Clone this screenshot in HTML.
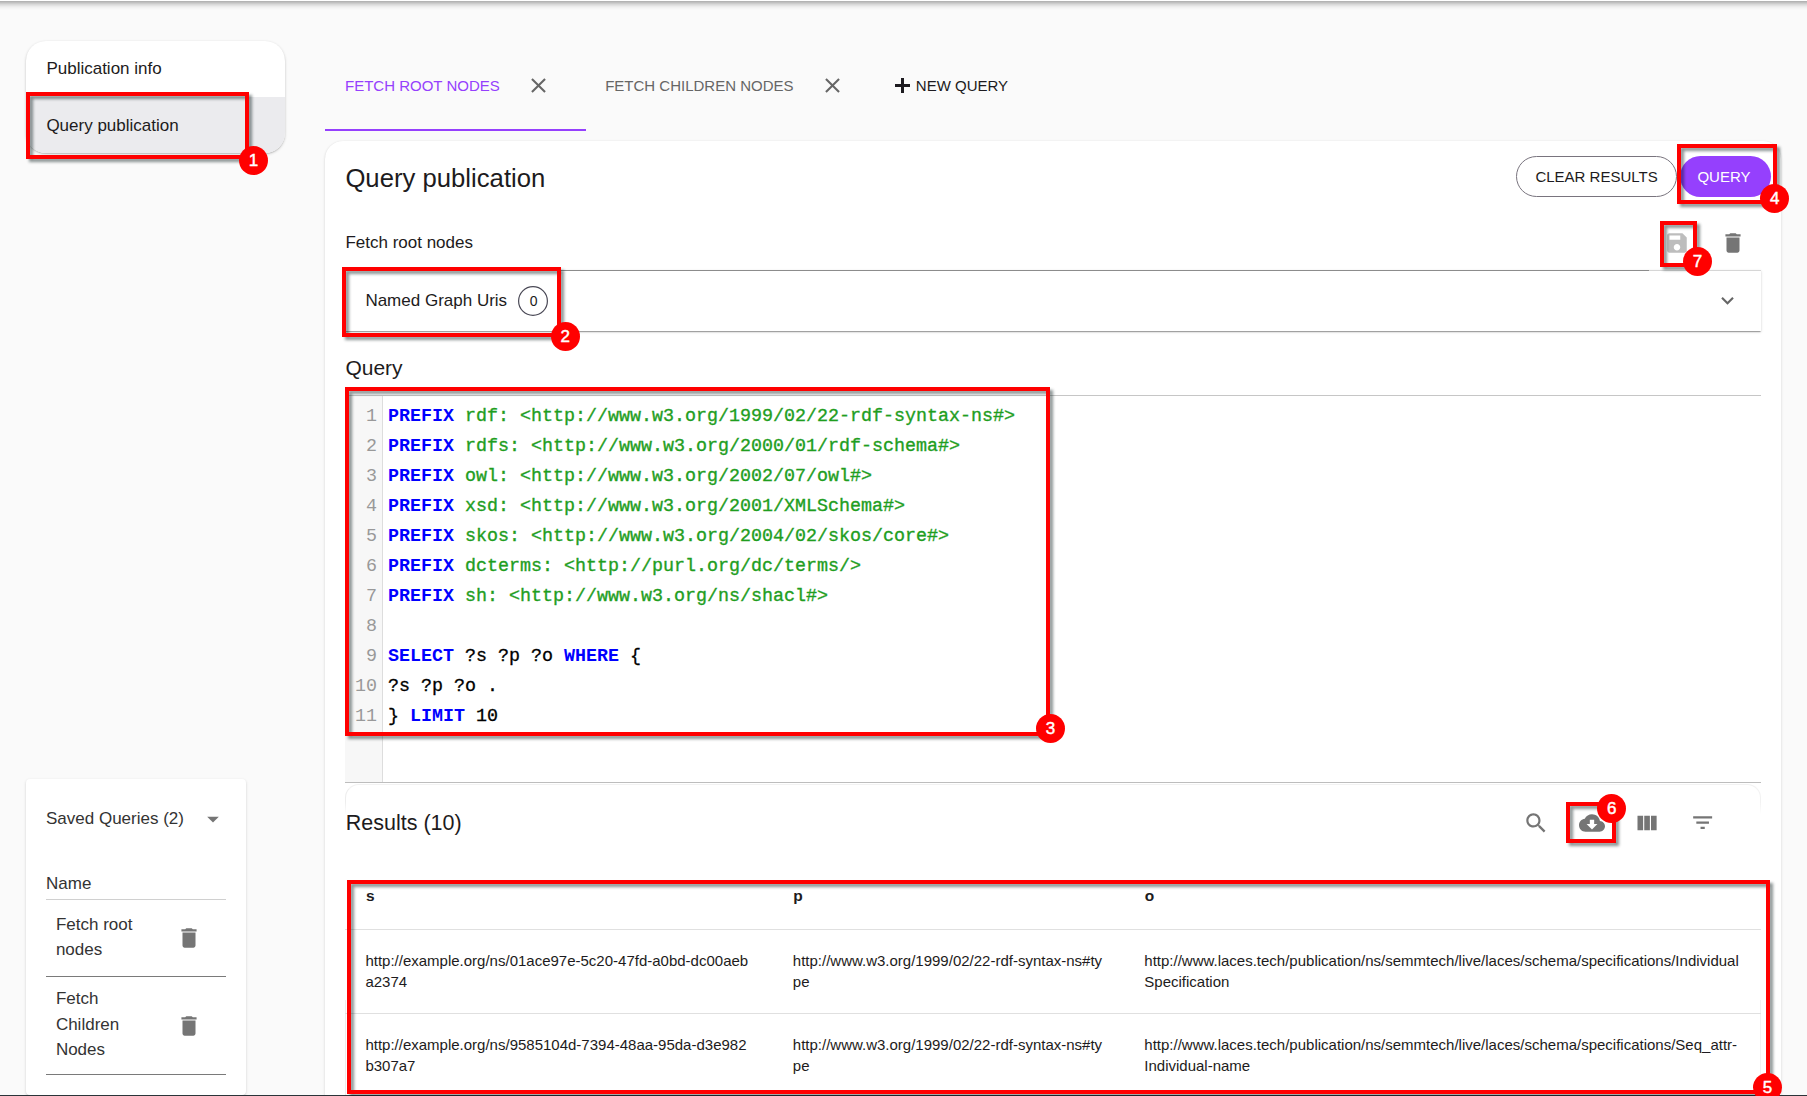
<!DOCTYPE html>
<html><head><meta charset="utf-8"><title>Query publication</title>
<style>
html,body{margin:0;padding:0}
body{width:1807px;height:1096px;overflow:hidden;background:#fafafa;position:relative;font-family:"Liberation Sans",sans-serif;-webkit-font-smoothing:antialiased}
.a{position:absolute}
.t{position:absolute;white-space:nowrap}
.rb{position:absolute;box-sizing:border-box;border:4px solid #f00;filter:drop-shadow(3px 3px 1.5px rgba(0,20,20,.45))}
.bd{position:absolute;border-radius:50%;background:#f00;color:#fff;text-align:center;font-size:17px;-webkit-text-stroke:0.45px #fff;font-family:"Liberation Sans",sans-serif}
</style></head><body>
<div class="a" style="left:-30px;top:-20px;width:1867px;height:21px;background:#fff;box-shadow:0 2px 4px -1px rgba(0,0,0,.2),0 4px 5px 0 rgba(0,0,0,.14),0 1px 10px 0 rgba(0,0,0,.12)"></div>
<div class="a" style="left:26px;top:41px;width:259px;height:112px;border-radius:20px;background:#fff;overflow:hidden;box-shadow:0 1px 3px rgba(0,0,0,.2),0 1px 1px rgba(0,0,0,.1)"><div class="a" style="left:0;top:56px;width:259px;height:56px;background:#ebebee"></div></div>
<div class="t" style="left:46.4px;top:59.61px;font-size:17px;line-height:17px;color:#1d1b20;font-weight:400;font-family:'Liberation Sans', sans-serif;">Publication info</div>
<div class="t" style="left:46.4px;top:116.61px;font-size:17px;line-height:17px;color:#1d1b20;font-weight:400;font-family:'Liberation Sans', sans-serif;">Query publication</div>
<div class="a" style="left:26px;top:779px;width:220px;height:316px;border-radius:4px;background:#fff;box-shadow:0 1px 3px rgba(0,0,0,.16),0 1px 1px rgba(0,0,0,.05)"></div>
<div class="t" style="left:46.0px;top:810.21px;font-size:17px;line-height:17px;color:#333;font-weight:400;font-family:'Liberation Sans', sans-serif;">Saved Queries (2)</div>
<svg class="a" style="left:199.3px;top:804.6px" width="28" height="28" viewBox="0 0 24 24"><path fill="#757575" d="M7 10l5 5 5-5z"/></svg>
<div class="t" style="left:46.0px;top:874.51px;font-size:17px;line-height:17px;color:#333;font-weight:400;font-family:'Liberation Sans', sans-serif;">Name</div>
<div class="a" style="left:46px;top:899px;width:180px;height:1px;background:#d0d0d0"></div>
<div class="t" style="left:55.9px;top:915.61px;font-size:17px;line-height:17px;color:#333;font-weight:400;font-family:'Liberation Sans', sans-serif;">Fetch root</div>
<div class="t" style="left:55.9px;top:941.41px;font-size:17px;line-height:17px;color:#333;font-weight:400;font-family:'Liberation Sans', sans-serif;">nodes</div>
<svg class="a" style="left:176px;top:925px" width="26" height="26" viewBox="0 0 24 24"><path fill="#757575" d="M6 19c0 1.1.9 2 2 2h8c1.1 0 2-.9 2-2V7H6v12zM19 4h-3.5l-1-1h-5l-1 1H5v2h14V4z"/></svg>
<div class="a" style="left:46px;top:976px;width:180px;height:1px;background:#7a7a7a"></div>
<div class="t" style="left:55.9px;top:990.21px;font-size:17px;line-height:17px;color:#333;font-weight:400;font-family:'Liberation Sans', sans-serif;">Fetch</div>
<div class="t" style="left:55.9px;top:1015.81px;font-size:17px;line-height:17px;color:#333;font-weight:400;font-family:'Liberation Sans', sans-serif;">Children</div>
<div class="t" style="left:55.9px;top:1041.21px;font-size:17px;line-height:17px;color:#333;font-weight:400;font-family:'Liberation Sans', sans-serif;">Nodes</div>
<svg class="a" style="left:176px;top:1013px" width="26" height="26" viewBox="0 0 24 24"><path fill="#757575" d="M6 19c0 1.1.9 2 2 2h8c1.1 0 2-.9 2-2V7H6v12zM19 4h-3.5l-1-1h-5l-1 1H5v2h14V4z"/></svg>
<div class="a" style="left:46px;top:1074px;width:180px;height:1px;background:#7a7a7a"></div>
<div class="t" style="left:345.0px;top:77.90px;font-size:15px;line-height:15px;color:#9540fd;font-weight:400;font-family:'Liberation Sans', sans-serif;">FETCH ROOT NODES</div>
<svg class="a" style="left:525.5px;top:73px" width="25" height="25" viewBox="0 0 24 24"><path fill="#666" d="M19 6.41L17.59 5 12 10.59 6.41 5 5 6.41 10.59 12 5 17.59 6.41 19 12 13.41 17.59 19 19 17.59 13.41 12z"/></svg>
<div class="t" style="left:605.1999999999999px;top:77.90px;font-size:15px;line-height:15px;color:#666;font-weight:400;font-family:'Liberation Sans', sans-serif;">FETCH CHILDREN NODES</div>
<svg class="a" style="left:819.5px;top:73px" width="25" height="25" viewBox="0 0 24 24"><path fill="#666" d="M19 6.41L17.59 5 12 10.59 6.41 5 5 6.41 10.59 12 5 17.59 6.41 19 12 13.41 17.59 19 19 17.59 13.41 12z"/></svg>
<div class="a" style="left:894.9px;top:84.3px;width:15.300000000000068px;height:2.6000000000000085px;background:#1d1b20"></div>
<div class="a" style="left:901.25px;top:77.9px;width:2.6000000000000227px;height:15.399999999999991px;background:#1d1b20"></div>
<div class="t" style="left:915.8px;top:78.10px;font-size:15px;line-height:15px;color:#1d1b20;font-weight:400;font-family:'Liberation Sans', sans-serif;">NEW QUERY</div>
<div class="a" style="left:325px;top:129px;width:261px;height:2px;background:#9540fd"></div>
<div class="a" style="left:325px;top:141px;width:1456px;height:1000px;border-radius:18px;background:#fff;box-shadow:0 1px 3px rgba(0,0,0,.14),0 0 1px rgba(0,0,0,.08)"></div>
<div class="t" style="left:345.4px;top:165.94px;font-size:25.7px;line-height:25.7px;color:#1d1b20;font-weight:400;font-family:'Liberation Sans', sans-serif;">Query publication</div>
<div class="a" style="left:1516px;top:156px;width:161px;height:41px;box-sizing:border-box;border:1px solid #79747e;border-radius:21px"></div>
<div class="t" style="left:1535.4px;top:168.90px;font-size:15px;line-height:15px;color:#1d1b20;font-weight:400;font-family:'Liberation Sans', sans-serif;">CLEAR RESULTS</div>
<div class="a" style="left:1680px;top:156px;width:91px;height:41px;border-radius:21px;background:#9540fd"></div>
<div class="t" style="left:1697.4px;top:168.90px;font-size:15px;line-height:15px;color:#fff;font-weight:400;font-family:'Liberation Sans', sans-serif;">QUERY</div>
<div class="t" style="left:345.4px;top:233.71px;font-size:17px;line-height:17px;color:#1d1b20;font-weight:400;font-family:'Liberation Sans', sans-serif;">Fetch root nodes</div>
<div class="a" style="left:345px;top:270px;width:1304px;height:1px;background:#8c8c8c"></div>
<svg class="a" style="left:1663.75px;top:229.8px" width="26" height="26" viewBox="0 0 24 24"><path fill="#bdbdbd" d="M17 3H5c-1.11 0-2 .9-2 2v14c0 1.1.89 2 2 2h14c1.1 0 2-.9 2-2V7l-4-4zm-5 16c-1.66 0-3-1.34-3-3s1.34-3 3-3 3 1.34 3 3-1.34 3-3 3zm3-10H5V5h10v4z"/></svg>
<svg class="a" style="left:1719.5px;top:230px" width="26" height="26" viewBox="0 0 24 24"><path fill="#757575" d="M6 19c0 1.1.9 2 2 2h8c1.1 0 2-.9 2-2V7H6v12zM19 4h-3.5l-1-1h-5l-1 1H5v2h14V4z"/></svg>
<div class="a" style="left:345px;top:270px;width:1416px;height:61px;background:#fff;box-shadow:0 2px 1px -1px rgba(0,0,0,.2),0 1px 1px 0 rgba(0,0,0,.14),0 1px 3px 0 rgba(0,0,0,.12)"></div>
<div class="a" style="left:1649px;top:270px;width:112px;height:1px;background:#d6d6d6"></div>
<div class="a" style="left:345px;top:270px;width:1304px;height:1px;background:#8c8c8c"></div>
<div class="t" style="left:365.4px;top:292.21px;font-size:17px;line-height:17px;color:#1d1b20;font-weight:400;font-family:'Liberation Sans', sans-serif;">Named Graph Uris</div>
<svg class="a" style="left:518px;top:286px" width="30" height="30"><circle cx="15" cy="15" r="14.4" fill="none" stroke="#4a4956" stroke-width="1.2"/></svg>
<div class="t" style="left:529.6999999999999px;top:293.95px;font-size:14px;line-height:14px;color:#1d1b20;font-weight:400;font-family:'Liberation Sans', sans-serif;">0</div>
<svg class="a" style="left:1715.3px;top:288.4px" width="25" height="25" viewBox="0 0 24 24"><path fill="#666" d="M16.59 8.59L12 13.17 7.41 8.59 6 10l6 6 6-6z"/></svg>
<div class="t" style="left:345.4px;top:356.82px;font-size:21px;line-height:21px;color:#1d1b20;font-weight:400;font-family:'Liberation Sans', sans-serif;">Query</div>
<div class="a" style="left:345px;top:395px;width:1416px;height:1px;background:#c6c6c6"></div>
<div class="a" style="left:345px;top:396px;width:37px;height:386px;background:#f7f7f7;border-right:1px solid #ddd"></div>
<div class="a" style="left:345px;top:782px;width:1416px;height:1px;background:#bdbdbd"></div>
<div class="t" style="left:366px;top:407.76px;font-size:18.33px;line-height:18.33px;color:#999;font-weight:400;font-family:'Liberation Mono', monospace;">1</div>
<div class="t" style="left:388px;top:407.76px;font-size:18.33px;line-height:18.33px;color:#000;font-weight:400;font-family:'Liberation Mono', monospace;-webkit-text-stroke:0.3px currentColor"><span style="color:#0000ff;font-weight:700;-webkit-text-stroke:0px">PREFIX</span> <span style="color:#1f9e1f;-webkit-text-stroke:0.35px #1f9e1f">rdf: &lt;http://www.w3.org/1999/02/22-rdf-syntax-ns#&gt;</span></div>
<div class="t" style="left:366px;top:437.76px;font-size:18.33px;line-height:18.33px;color:#999;font-weight:400;font-family:'Liberation Mono', monospace;">2</div>
<div class="t" style="left:388px;top:437.76px;font-size:18.33px;line-height:18.33px;color:#000;font-weight:400;font-family:'Liberation Mono', monospace;-webkit-text-stroke:0.3px currentColor"><span style="color:#0000ff;font-weight:700;-webkit-text-stroke:0px">PREFIX</span> <span style="color:#1f9e1f;-webkit-text-stroke:0.35px #1f9e1f">rdfs: &lt;http://www.w3.org/2000/01/rdf-schema#&gt;</span></div>
<div class="t" style="left:366px;top:467.76px;font-size:18.33px;line-height:18.33px;color:#999;font-weight:400;font-family:'Liberation Mono', monospace;">3</div>
<div class="t" style="left:388px;top:467.76px;font-size:18.33px;line-height:18.33px;color:#000;font-weight:400;font-family:'Liberation Mono', monospace;-webkit-text-stroke:0.3px currentColor"><span style="color:#0000ff;font-weight:700;-webkit-text-stroke:0px">PREFIX</span> <span style="color:#1f9e1f;-webkit-text-stroke:0.35px #1f9e1f">owl: &lt;http://www.w3.org/2002/07/owl#&gt;</span></div>
<div class="t" style="left:366px;top:497.76px;font-size:18.33px;line-height:18.33px;color:#999;font-weight:400;font-family:'Liberation Mono', monospace;">4</div>
<div class="t" style="left:388px;top:497.76px;font-size:18.33px;line-height:18.33px;color:#000;font-weight:400;font-family:'Liberation Mono', monospace;-webkit-text-stroke:0.3px currentColor"><span style="color:#0000ff;font-weight:700;-webkit-text-stroke:0px">PREFIX</span> <span style="color:#1f9e1f;-webkit-text-stroke:0.35px #1f9e1f">xsd: &lt;http://www.w3.org/2001/XMLSchema#&gt;</span></div>
<div class="t" style="left:366px;top:527.76px;font-size:18.33px;line-height:18.33px;color:#999;font-weight:400;font-family:'Liberation Mono', monospace;">5</div>
<div class="t" style="left:388px;top:527.76px;font-size:18.33px;line-height:18.33px;color:#000;font-weight:400;font-family:'Liberation Mono', monospace;-webkit-text-stroke:0.3px currentColor"><span style="color:#0000ff;font-weight:700;-webkit-text-stroke:0px">PREFIX</span> <span style="color:#1f9e1f;-webkit-text-stroke:0.35px #1f9e1f">skos: &lt;http://www.w3.org/2004/02/skos/core#&gt;</span></div>
<div class="t" style="left:366px;top:557.76px;font-size:18.33px;line-height:18.33px;color:#999;font-weight:400;font-family:'Liberation Mono', monospace;">6</div>
<div class="t" style="left:388px;top:557.76px;font-size:18.33px;line-height:18.33px;color:#000;font-weight:400;font-family:'Liberation Mono', monospace;-webkit-text-stroke:0.3px currentColor"><span style="color:#0000ff;font-weight:700;-webkit-text-stroke:0px">PREFIX</span> <span style="color:#1f9e1f;-webkit-text-stroke:0.35px #1f9e1f">dcterms: &lt;http://purl.org/dc/terms/&gt;</span></div>
<div class="t" style="left:366px;top:587.76px;font-size:18.33px;line-height:18.33px;color:#999;font-weight:400;font-family:'Liberation Mono', monospace;">7</div>
<div class="t" style="left:388px;top:587.76px;font-size:18.33px;line-height:18.33px;color:#000;font-weight:400;font-family:'Liberation Mono', monospace;-webkit-text-stroke:0.3px currentColor"><span style="color:#0000ff;font-weight:700;-webkit-text-stroke:0px">PREFIX</span> <span style="color:#1f9e1f;-webkit-text-stroke:0.35px #1f9e1f">sh: &lt;http://www.w3.org/ns/shacl#&gt;</span></div>
<div class="t" style="left:366px;top:617.76px;font-size:18.33px;line-height:18.33px;color:#999;font-weight:400;font-family:'Liberation Mono', monospace;">8</div>
<div class="t" style="left:366px;top:647.76px;font-size:18.33px;line-height:18.33px;color:#999;font-weight:400;font-family:'Liberation Mono', monospace;">9</div>
<div class="t" style="left:388px;top:647.76px;font-size:18.33px;line-height:18.33px;color:#000;font-weight:400;font-family:'Liberation Mono', monospace;-webkit-text-stroke:0.3px currentColor"><span style="color:#0000ff;font-weight:700;-webkit-text-stroke:0px">SELECT</span> ?s ?p ?o <span style="color:#0000ff;font-weight:700;-webkit-text-stroke:0px">WHERE</span> {</div>
<div class="t" style="left:355px;top:677.76px;font-size:18.33px;line-height:18.33px;color:#999;font-weight:400;font-family:'Liberation Mono', monospace;">10</div>
<div class="t" style="left:388px;top:677.76px;font-size:18.33px;line-height:18.33px;color:#000;font-weight:400;font-family:'Liberation Mono', monospace;-webkit-text-stroke:0.3px currentColor">?s ?p ?o .</div>
<div class="t" style="left:355px;top:707.76px;font-size:18.33px;line-height:18.33px;color:#999;font-weight:400;font-family:'Liberation Mono', monospace;">11</div>
<div class="t" style="left:388px;top:707.76px;font-size:18.33px;line-height:18.33px;color:#000;font-weight:400;font-family:'Liberation Mono', monospace;-webkit-text-stroke:0.3px currentColor">} <span style="color:#0000ff;font-weight:700;-webkit-text-stroke:0px">LIMIT</span> 10</div>
<div class="a" style="left:345px;top:784px;width:1416px;height:400px;border-radius:14px 14px 0 0;background:#fff;box-sizing:border-box;border:1px solid transparent;border-top-color:rgba(0,0,0,.05);border-left-color:rgba(0,0,0,.07);border-right-color:rgba(0,0,0,.05)"></div>
<div class="a" style="left:344px;top:802px;width:3px;height:198px;background:linear-gradient(rgba(255,255,255,0),#fff 12px)"></div>
<div class="a" style="left:1759px;top:802px;width:3px;height:198px;background:linear-gradient(rgba(255,255,255,0),#fff 12px)"></div>
<div class="t" style="left:345.79999999999995px;top:813.40px;font-size:21.5px;line-height:21.5px;color:#1d1b20;font-weight:400;font-family:'Liberation Sans', sans-serif;">Results (10)</div>
<svg class="a" style="left:1522.5px;top:809.7px" width="26.3" height="26.3" viewBox="0 0 24 24"><path fill="#757575" d="M15.5 14h-.79l-.28-.27C15.41 12.59 16 11.11 16 9.5 16 5.910 13.09 3 9.5 3S3 5.91 3 9.5 5.91 16 9.5 16c1.61 0 3.09-.59 4.23-1.57l.27.28v.79l5 4.99L20.49 19l-4.99-5zm-6 0C7.01 14 5 11.99 5 9.5S7.01 5 9.5 5 14 7.01 14 9.5 11.99 14 9.5 14z"/></svg>
<svg class="a" style="left:1578.8px;top:809.7px" width="26" height="26" viewBox="0 0 24 24"><path fill="#757575" d="M19.35 10.04C18.67 6.59 15.64 4 12 4 9.11 4 6.6 5.64 5.35 8.04 2.34 8.36 0 10.91 0 14c0 3.310 2.69 6 6 6h13c2.76 0 5-2.24 5-5 0-2.64-2.05-4.780-4.65-4.96zM17 13l-5 5-5-5h3V9h4v4h3z"/></svg>
<svg class="a" style="left:1632.7px;top:809.5px" width="27" height="27" viewBox="0 0 24 24"><path fill="#757575" d="M10 18h5V5h-5v13zm-6 0h5V5H4v13zM16 5v13h5V5h-5z"/></svg>
<svg class="a" style="left:1690px;top:810.3px" width="25.3" height="25.3" viewBox="0 0 24 24"><path fill="#757575" d="M10 18h4v-2h-4v2zM3 6v2h18V6H3zm3 7h12v-2H6v2z"/></svg>
<div class="t" style="left:365.9px;top:887.88px;font-size:15.5px;line-height:15.5px;color:#1d1b20;font-weight:700;font-family:'Liberation Sans', sans-serif;">s</div>
<div class="t" style="left:793.3px;top:887.88px;font-size:15.5px;line-height:15.5px;color:#1d1b20;font-weight:700;font-family:'Liberation Sans', sans-serif;">p</div>
<div class="t" style="left:1144.8000000000002px;top:887.88px;font-size:15.5px;line-height:15.5px;color:#1d1b20;font-weight:700;font-family:'Liberation Sans', sans-serif;">o</div>
<div class="a" style="left:345px;top:929px;width:1416px;height:1px;background:#e0e0e0"></div>
<div class="a" style="left:345px;top:1013px;width:1416px;height:1px;background:#e0e0e0"></div>
<div class="t" style="left:365.4px;top:952.80px;font-size:15px;line-height:15px;color:#1d1b20;font-weight:400;font-family:'Liberation Sans', sans-serif;">http://example.org/ns/01ace97e-5c20-47fd-a0bd-dc00aeb</div>
<div class="t" style="left:365.4px;top:974.10px;font-size:15px;line-height:15px;color:#1d1b20;font-weight:400;font-family:'Liberation Sans', sans-serif;">a2374</div>
<div class="t" style="left:792.8px;top:952.80px;font-size:15px;line-height:15px;color:#1d1b20;font-weight:400;font-family:'Liberation Sans', sans-serif;">http://www.w3.org/1999/02/22-rdf-syntax-ns#ty</div>
<div class="t" style="left:792.8px;top:974.10px;font-size:15px;line-height:15px;color:#1d1b20;font-weight:400;font-family:'Liberation Sans', sans-serif;">pe</div>
<div class="t" style="left:1144.3000000000002px;top:952.80px;font-size:15px;line-height:15px;color:#1d1b20;font-weight:400;font-family:'Liberation Sans', sans-serif;">http://www.laces.tech/publication/ns/semmtech/live/laces/schema/specifications/Individual</div>
<div class="t" style="left:1144.3000000000002px;top:974.10px;font-size:15px;line-height:15px;color:#1d1b20;font-weight:400;font-family:'Liberation Sans', sans-serif;">Specification</div>
<div class="t" style="left:365.4px;top:1036.80px;font-size:15px;line-height:15px;color:#1d1b20;font-weight:400;font-family:'Liberation Sans', sans-serif;">http://example.org/ns/9585104d-7394-48aa-95da-d3e982</div>
<div class="t" style="left:365.4px;top:1058.10px;font-size:15px;line-height:15px;color:#1d1b20;font-weight:400;font-family:'Liberation Sans', sans-serif;">b307a7</div>
<div class="t" style="left:792.8px;top:1036.80px;font-size:15px;line-height:15px;color:#1d1b20;font-weight:400;font-family:'Liberation Sans', sans-serif;">http://www.w3.org/1999/02/22-rdf-syntax-ns#ty</div>
<div class="t" style="left:792.8px;top:1058.10px;font-size:15px;line-height:15px;color:#1d1b20;font-weight:400;font-family:'Liberation Sans', sans-serif;">pe</div>
<div class="t" style="left:1144.3000000000002px;top:1036.80px;font-size:15px;line-height:15px;color:#1d1b20;font-weight:400;font-family:'Liberation Sans', sans-serif;">http://www.laces.tech/publication/ns/semmtech/live/laces/schema/specifications/Seq_attr-</div>
<div class="t" style="left:1144.3000000000002px;top:1058.10px;font-size:15px;line-height:15px;color:#1d1b20;font-weight:400;font-family:'Liberation Sans', sans-serif;">Individual-name</div>
<div class="a" style="left:0px;top:1095px;width:1807px;height:1px;background:#2b3439"></div>
<div class="rb" style="left:26px;top:92px;width:223px;height:67px"></div>
<div class="bd" style="left:238.80px;top:145.80px;width:29.4px;height:29.4px;line-height:29.4px">1</div>
<div class="rb" style="left:342px;top:267px;width:219px;height:70px"></div>
<div class="bd" style="left:550.60px;top:321.60px;width:29.4px;height:29.4px;line-height:29.4px">2</div>
<div class="rb" style="left:345px;top:387px;width:705px;height:349px"></div>
<div class="bd" style="left:1035.90px;top:713.90px;width:29.4px;height:29.4px;line-height:29.4px">3</div>
<div class="rb" style="left:1677px;top:144px;width:100px;height:60px"></div>
<div class="bd" style="left:1760.00px;top:183.90px;width:29.4px;height:29.4px;line-height:29.4px">4</div>
<div class="rb" style="left:347px;top:880px;width:1423px;height:214px"></div>
<div class="bd" style="left:1752.70px;top:1072.80px;width:29.4px;height:29.4px;line-height:29.4px">5</div>
<div class="rb" style="left:1566px;top:802px;width:50px;height:41px"></div>
<div class="bd" style="left:1597.00px;top:793.60px;width:29.4px;height:29.4px;line-height:29.4px">6</div>
<div class="rb" style="left:1660px;top:221px;width:37px;height:46px"></div>
<div class="bd" style="left:1682.80px;top:246.80px;width:29.4px;height:29.4px;line-height:29.4px">7</div>
</body></html>
